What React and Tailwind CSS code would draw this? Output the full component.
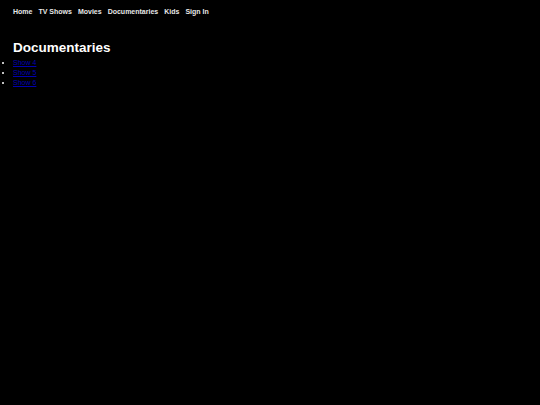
const navItems = ['Home', 'TV Shows', 'Movies', 'Documentaries', 'Kids', 'Sign In'];
const shows = ['Show 4', 'Show 5', 'Show 6'];

export default function App() {
  return (
    <div className="min-h-[405px] bg-black text-white font-['Liberation_Sans',Arial,sans-serif]">
      <nav className="flex gap-[6px] px-[13px] pt-[8px] text-[7px] leading-[8px] font-bold">
        {navItems.map((item) => (
          <a key={item} href="#" className="text-[#e8e8e8]">
            {item}
          </a>
        ))}
      </nav>

      <main className="px-[13px] pt-[24px]">
        <h1 className="text-[13.5px] leading-[16px] font-bold">Documentaries</h1>
        <ul className="mt-[2px] list-disc text-[7px] leading-[10px]">
          {shows.map((show) => (
            <li key={show}>
              <a href="#" className="text-[#0000b0] underline">
                {show}
              </a>
            </li>
          ))}
        </ul>
      </main>
    </div>
  );
}
